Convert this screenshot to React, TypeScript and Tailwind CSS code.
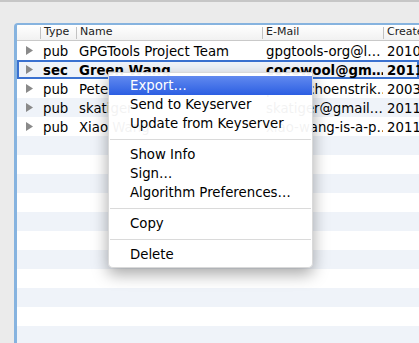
import React from "react";

const keys = [
  { type: "pub", name: "GPGTools Project Team", email: "gpgtools-org@l…", created: "2010" },
  { type: "sec", name: "Green Wang", email: "cocowool@gm…", created: "2011", bold: true, selected: true },
  { type: "pub", name: "Pete Schoenstrik", email: "pete.schoenstrik…", created: "2003" },
  { type: "pub", name: "skatiger", email: "skatiger@gmail.…", created: "2011" },
  { type: "pub", name: "Xiao Wang", email: "xiao-wang-is-a-p…", created: "2011" },
];

const menu: (string | null)[] = [
  "Export…",
  "Send to Keyserver",
  "Update from Keyserver",
  null,
  "Show Info",
  "Sign…",
  "Algorithm Preferences…",
  null,
  "Copy",
  null,
  "Delete",
];

function Triangle() {
  return (
    <svg width="7" height="9" viewBox="0 0 7 9">
      <polygon points="0,0 7,4.5 0,9" fill="#8a8a8a" />
    </svg>
  );
}

function HeaderCell({ label, className }: { label: string; className: string }) {
  return (
    <div className={`flex items-center h-full ${className}`}>
      <span className="w-px h-[12px] bg-[#c2c2c2]" />
      <span className="pl-[3px]">{label}</span>
    </div>
  );
}

export default function App() {
  const filler = Array.from({ length: 12 });

  return (
    <div
      className="relative w-[419px] h-[343px] overflow-hidden bg-[#ebebeb] border-t-2 border-[#c6c6c6] flex flex-col"
      style={{ fontFamily: '"DejaVu Sans", "Liberation Sans", sans-serif' }}
    >
      <div className="h-[21px] shrink-0" />

      <div className="ml-[14px] flex-1 bg-white border-l-[3px] border-t-2 border-[#86b3df] rounded-tl-[4px] overflow-hidden">
        {/* header */}
        <div className="flex h-[16px] border-b border-[#c9c9c9] bg-linear-to-b from-white to-[#f1f1f1] text-[11px] text-[#222] whitespace-nowrap">
          <div className="w-[23px] shrink-0" />
          <HeaderCell label="Type" className="w-[36px] shrink-0" />
          <HeaderCell label="Name" className="w-[186px] shrink-0" />
          <HeaderCell label="E-Mail" className="w-[121px] shrink-0" />
          <HeaderCell label="Created" className="flex-1" />
        </div>

        {/* rows */}
        <div className="text-[13.3px] text-black whitespace-nowrap">
          {keys.map((k, i) => (
            <div
              key={k.name}
              className={`flex items-center h-[19px] pt-[2px] ${i % 2 ? "bg-[#eff3f9]" : "bg-white"} ${
                k.selected ? "shadow-[inset_0_0_0_2px_#3a71d0]" : ""
              } ${k.bold ? "font-bold" : ""}`}
            >
              <div className="w-[23px] shrink-0 pl-[9px] flex items-center -mt-[2px]">
                <Triangle />
              </div>
              <div className="w-[36px] shrink-0 pl-[3px] overflow-hidden">{k.type}</div>
              <div className="w-[186px] shrink-0 pl-[3px] overflow-hidden">{k.name}</div>
              <div className="w-[121px] shrink-0 pl-[4px] overflow-hidden">{k.email}</div>
              <div className="flex-1 pl-[4px] overflow-hidden">{k.created}</div>
            </div>
          ))}
          {filler.map((_, i) => (
            <div
              key={i}
              className={`h-[19px] ${(i + keys.length) % 2 ? "bg-[#eff3f9]" : "bg-white"}`}
            />
          ))}
        </div>
      </div>

      {/* context menu */}
      <div className="absolute left-[108px] top-[70px] w-[205px] pt-[3px] pb-[3px] bg-white/95 border border-black/15 rounded-b-[5px] shadow-[0_6px_16px_rgba(0,0,0,0.35)] text-[13.3px] text-black whitespace-nowrap">
        {menu.map((item, i) =>
          item === null ? (
            <div key={i} className="h-[12px] flex items-center px-px">
              <div className="h-px w-full bg-[#dadada]" />
            </div>
          ) : (
            <div
              key={i}
              className={`h-[19px] pl-[21px] flex items-center ${
                i === 0 ? "bg-linear-to-b from-[#6189ef] to-[#2c5ee2] text-white" : ""
              }`}
            >
              {item}
            </div>
          )
        )}
      </div>
    </div>
  );
}
